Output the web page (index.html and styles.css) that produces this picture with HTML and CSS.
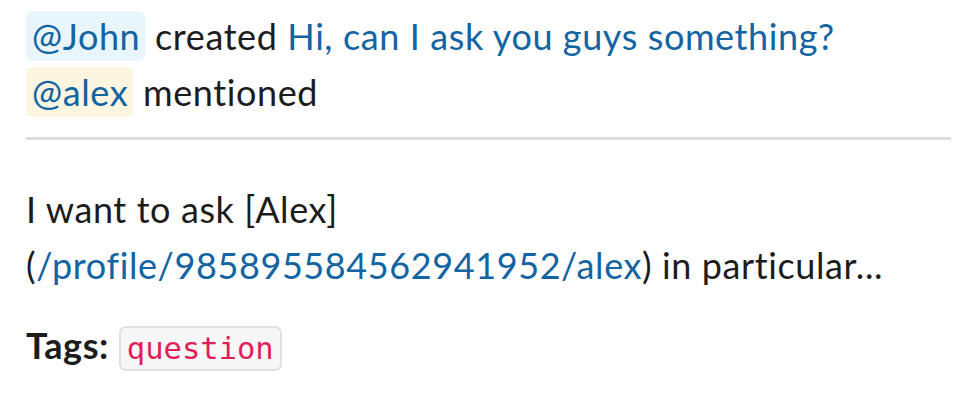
FILE: index.html
```html
<!DOCTYPE html>
<html lang="en">
<head>
<meta charset="utf-8">
<title>Notification</title>
<link rel="stylesheet" href="styles.css">
</head>
<body>
<div class="message">
  <div class="header">
    <div class="line"><span class="mention mention-other">@John</span> created <a class="link" href="#">Hi, can I ask you guys something?</a></div>
    <div class="line"><span class="mention mention-self">@alex</span> mentioned</div>
  </div>
  <hr class="divider">
  <p class="body-text">I want to ask [Alex]<br>(<a class="link" href="#">/profile/985895584562941952/alex</a>) in particular...</p>
  <p class="tags"><strong class="tags-label">Tags:</strong> <code class="tag">question</code></p>
</div>
</body>
</html>
```

FILE: styles.css
```css
html, body {
  margin: 0;
  padding: 0;
  background: #ffffff;
}

body {
  font-family: Lato, "Noto Sans", sans-serif;
  font-size: 36px;
  line-height: 56px;
  letter-spacing: 0.6px;
  color: #1d1c1d;
}

.message {
  padding: 8px 8px 0 26px;
}

.line {
  white-space: nowrap;
}

.mention {
  color: #1264a3;
  padding: 3px 5px 3px 6px;
  border-radius: 6px;
}

.mention-other {
  background: #e8f5fa;
}

.mention-self {
  background: #fcf5df;
}

.link {
  color: #1264a3;
  text-decoration: none;
}

.divider {
  border: 0;
  height: 3px;
  background: #dddddd;
  margin: 17px 0 41px 0;
}

.body-text {
  margin: 0;
}

.tags {
  margin: 24px 0 0 0;
}

.tags-label {
  font-weight: 700;
}

.tag {
  font-family: "DejaVu Sans Mono", "Liberation Mono", monospace;
  font-size: 30.5px;
  letter-spacing: 0;
  color: #e01e5a;
  background: #f7f7f7;
  border: 2px solid #e1e1e1;
  border-radius: 7px;
  padding: 3px 6px;
}
```
